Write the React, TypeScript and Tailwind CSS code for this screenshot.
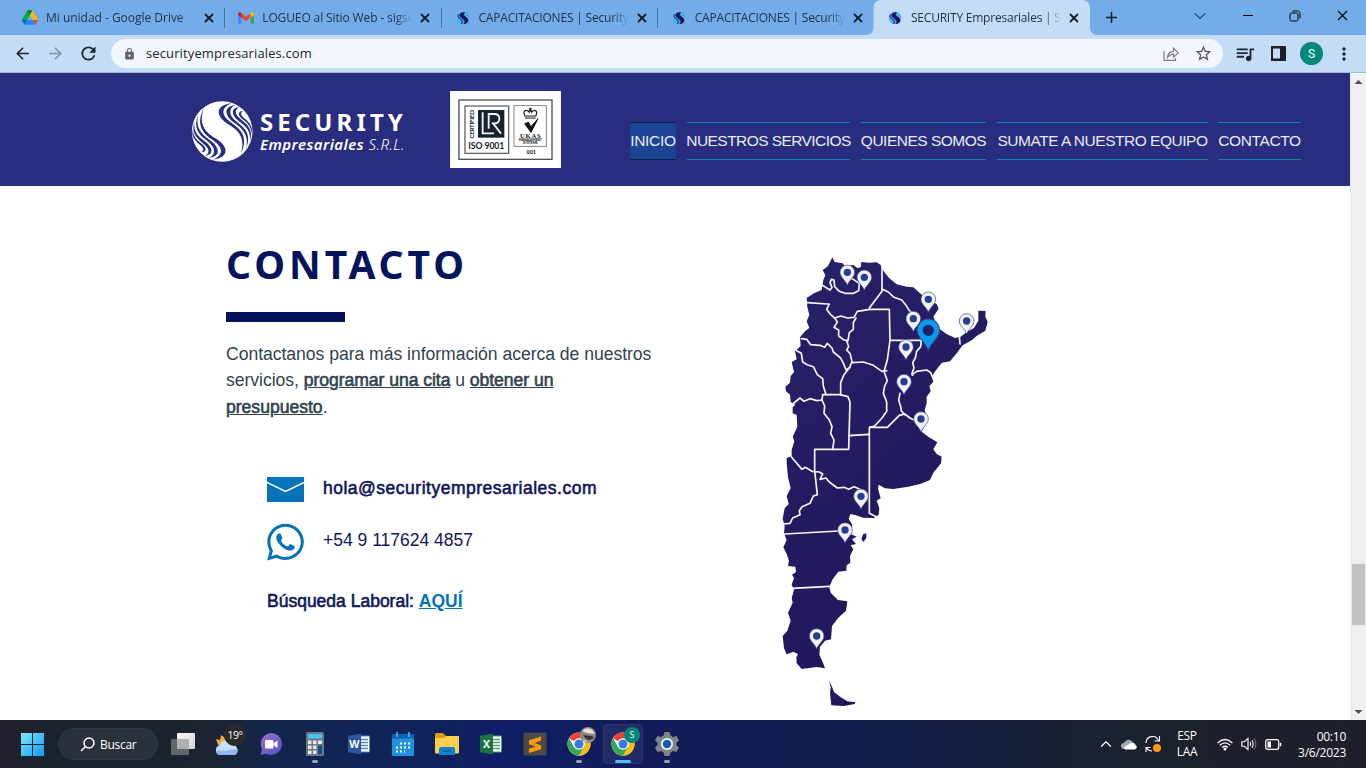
import React from "react";
import {
  MdArrowBack,
  MdArrowForward,
  MdRefresh,
  MdLock,
  MdStarBorder,
  MdQueueMusic,
  MdMoreVert,
  MdAdd,
} from "react-icons/md";
import { FaWhatsapp } from "react-icons/fa";
import { ChevronDown, ChevronUp, X } from "lucide-react";

function DriveIcon() {
  return (
    <svg viewBox="0 0 87.3 78" className="h-[15px] w-4">
      <path d="M6.6 66.85l3.85 6.65c.8 1.4 1.95 2.5 3.3 3.3L27.5 53H0c0 1.55.4 3.1 1.2 4.5z" fill="#0066da" />
      <path d="M43.65 25L29.9 1.2c-1.35.8-2.5 1.9-3.3 3.3L1.2 48.5A9 9 0 0 0 0 53h27.5z" fill="#00ac47" />
      <path d="M73.55 76.8c1.35-.8 2.5-1.9 3.3-3.3l1.6-2.75 7.65-13.25c.8-1.4 1.2-2.95 1.2-4.5H59.8l5.85 11.5z" fill="#ea4335" />
      <path d="M43.65 25L57.4 1.2C56.05.4 54.5 0 52.9 0H34.4c-1.6 0-3.15.45-4.5 1.2z" fill="#00832d" />
      <path d="M59.8 53H27.5L13.75 76.8c1.35.8 2.9 1.2 4.5 1.2h50.8c1.6 0 3.15-.45 4.5-1.2z" fill="#2684fc" />
      <path d="M73.4 26.5L60.7 4.5c-.8-1.4-1.95-2.5-3.3-3.3L43.65 25 59.8 53h27.45c0-1.55-.4-3.1-1.2-4.5z" fill="#ffba00" />
    </svg>
  );
}

function GmailIcon() {
  return (
    <svg viewBox="0 0 16 16" className="h-4 w-4">
      <path d="M0 4v8.6c0 .8.5 1.2 1.2 1.2h2.4V7z" fill="#4285f4" />
      <path d="M16 4v8.6c0 .8-.5 1.2-1.2 1.2h-2.4V7z" fill="#34a853" />
      <path d="M12.4 3.6V7.6L16 5V3.8c0-1.5-1.6-2-2.6-1.2z" fill="#fbbc04" />
      <path d="M3.6 7.6V3.4L8 6.7l4.4-3.3v4.2L8 11z" fill="#ea4335" />
      <path d="M0 3.8V5l3.6 2.6V3.4l-1-.8C1.600 1.800 0 2.300 0 3.800z" fill="#c5221f" />
    </svg>
  );
}

function SecurityIcon() {
  return (
    <svg viewBox="0 0 16 16" className="h-4 w-4">
      <circle cx="8" cy="8" r="6.200" fill="#4aa5e4" />
      <path d="M10.500 2.200C5 1.600 3 5 6 7.500s5 3.500 2.500 6.500c5-.4 6.500-4 3.500-6.500S7 5 10.500 2.200z" fill="#1c1257" />
      <path d="M3.400 4.500C2 8 5 8.500 6.500 10s1 3-.5 3.600" fill="none" stroke="#1f4fa8" strokeWidth="1.400" />
      <path d="M11.500 3c-2 1.200-1 3 .5 4.200s1.600 2 1.600 3" fill="none" stroke="#55d2f2" strokeWidth="1" />
      <path d="M2.200 7c.2 3 3.500 2.800 3.300 5.500" fill="none" stroke="#55d2f2" strokeWidth="1" />
    </svg>
  );
}

const tabs = [
  { icon: <DriveIcon />, title: "Mi unidad - Google Drive", cls: "tracking-[-0.02px]" },
  { icon: <GmailIcon />, title: "LOGUEO al Sitio Web - sigseguridad", cls: "tracking-[-0.12px]" },
  { icon: <SecurityIcon />, title: "CAPACITACIONES | Security Empresa", cls: "tracking-[-0.2px]" },
  { icon: <SecurityIcon />, title: "CAPACITACIONES | Security Empresa", cls: "tracking-[-0.2px]" },
  { icon: <SecurityIcon />, title: "SECURITY Empresariales | Servicios", cls: "tracking-[-0.22px]" },
];

function TabStrip() {
  return (
    <div className="flex h-[35px] bg-[#73ade9] pl-[9px] text-[#1e3045]">
      {tabs.map((t, i) => {
        const active = i === 4;
        return (
          <div key={i} className="relative flex w-[216.250px] shrink-0 items-center">
            {active && (
              <svg viewBox="0 0 232 35" className="absolute top-0 -left-[8px] h-[35px] w-[232px]">
                <path d="M0 35c5 0 7.500-3 7.500-8V8c0-5 3-8 8-8h200.500c5 0 8 3 8 8v19c0 5 3 8 8 8z" fill="#c5dcf7" />
              </svg>
            )}
            <div className="relative ml-[13px] flex h-4 w-4 shrink-0 items-center">{t.icon}</div>
            <div
              className={`relative ml-2 w-[151px] overflow-hidden whitespace-nowrap font-['Open_Sans',sans-serif] text-xs leading-4 [mask-image:linear-gradient(90deg,#000_88%,transparent)] ${t.cls}`}
            >
              {t.title}
            </div>
            <X className="relative ml-[5px] h-[14px] w-[14px] shrink-0 text-[#15202c]" strokeWidth={3.2} />
            {i < 3 && <div className="ml-auto h-5 w-px bg-[#4a7299]" />}
          </div>
        );
      })}
      <div className="flex w-[31px] items-center justify-end">
        <MdAdd className="h-[19px] w-[19px] text-[#15202c]" />
      </div>
      <div className="ml-auto flex h-[31px] items-center pr-[15px] text-black">
        <ChevronDown className="mr-[33px] h-5 w-5" strokeWidth={1.2} />
        <div className="mr-[36px] h-px w-[10px] bg-black" />
        <svg viewBox="0 0 12 12" className="mr-[33px] h-3 w-3" fill="none" stroke="#000">
          <rect x="1" y="3" width="8" height="8" rx="1.500" />
          <path d="M3.500 1h5c1.600 0 2.500 1 2.500 2.500v5" />
        </svg>
        <X className="h-[17px] w-[17px]" strokeWidth={1.500} />
      </div>
    </div>
  );
}

function Toolbar() {
  return (
    <div className="flex h-[38px] items-center border-b border-[#a6b9cf] bg-[#c5dcf7] text-[#1d262f]">
      <MdArrowBack className="ml-[13px] h-[19px] w-[19px]" />
      <MdArrowForward className="ml-[14px] h-[19px] w-[19px] text-[#8093a8]" />
      <MdRefresh className="ml-[13px] h-[21px] w-[21px]" />
      <div className="ml-[12px] flex h-[29px] w-[1112px] items-center rounded-full bg-[#f2f7fd]">
        <MdLock className="ml-3 h-[14px] w-[13px] text-[#5f6368]" />
        <span className="ml-[10px] font-['Open_Sans',sans-serif] text-[13px] tracking-[0.12px] text-[#22262b]">
          securityempresariales.com
        </span>
        <svg viewBox="0 0 16 16" className="ml-auto h-4 w-4" fill="none" stroke="#7a7f85" strokeWidth="1.200">
          <path d="M1 5v9.400h11.500v-2.500" />
          <path d="M4.500 11.500C4.800 8 7 5.600 10.500 5.400V2.200L15.300 6.800l-4.800 4.400V8.200C8 8.200 6 9.300 4.500 11.500z" />
        </svg>
        <MdStarBorder className="mr-[10px] ml-[15px] h-[19px] w-[19px] text-[#50565c]" />
      </div>
      <MdQueueMusic className="ml-[11px] h-[22px] w-[22px]" />
      <svg viewBox="0 0 15 15" className="ml-[15px] h-[15px] w-[15px]">
        <path d="M0 0h15v15H0zM2 2.500v10h7v-10z" fill="#1d1f24" fillRule="evenodd" />
      </svg>
      <div className="ml-[14px] flex h-[23px] w-[23px] items-center justify-center rounded-full bg-[#00897b] font-['Roboto',sans-serif] text-xs text-white">
        S
      </div>
      <MdMoreVert className="ml-[11px] h-[20px] w-[20px]" />
    </div>
  );
}

function Globe() {
  const curves = (
    <g fill="#292d80">
      <path d="M154 70C104 76 106 110 147 134C182 155 196 178 182 224C204 178 190 152 155 129C122 106 122 84 154 70z" />
      <path d="M166 75C128 80 134 108 164 129C192 149 206 168 199 203C213 168 200 146 170 125C146 106 144 86 166 75z" />
      <path d="M178 82C150 84 154 108 180 126C202 142 212 155 210 182C219 156 208 138 186 121C166 105 160 92 178 82z" />
      <path d="M189 92C170 94 174 108 191 120C207 133 213 143 215 160C219 142 210 130 196 117C184 107 178 100 189 92z" />
    </g>
  );
  return (
    <svg viewBox="33 60 186 189" className="h-[63px] w-[62px]">
      <circle cx="126.500" cy="154.500" r="91" fill="#fff" />
      {curves}
      <g transform="rotate(180 126.500 154.500)">{curves}</g>
    </svg>
  );
}

function Certificate() {
  return (
    <svg viewBox="0 0 333 231" className="h-[77px] w-[111px] bg-white">
      <rect x="27" y="27" width="279" height="178" fill="none" stroke="#4c5154" strokeWidth="4" />
      <rect x="45" y="45" width="131" height="142" fill="none" stroke="#4c5154" strokeWidth="3.500" />
      <rect x="192" y="44" width="97" height="122" fill="none" stroke="#6b7072" strokeWidth="2.500" />
      <rect x="84" y="57" width="79" height="83" fill="#17222b" />
      <path d="M98 64v63h34M116 113V69h17q15 0 15 14t-15 14h-8M130 98l23 30" fill="none" stroke="#f4f6f6" strokeWidth="5.500" />
      <text x="0" y="0" transform="translate(72 143) rotate(-90)" fontFamily="Lato, sans-serif" fontWeight="700" fontSize="19" textLength="86" fill="#17222b">CERTIFIED</text>
      <text x="55" y="173" fontFamily="Lato, sans-serif" fontWeight="700" fontSize="26" textLength="108" fill="#17222b">ISO 9001</text>
      <path d="M225 75c-8-14 2-22 12-12 0-8 8-8 8 0 10-10 20-2 12 12zM225 81h32M241 50v12M236 54h10" fill="none" stroke="#17191b" strokeWidth="3.500" />
      <path d="M224 98l12-4 6 14 22-25-21 41z" fill="#111" stroke="#111" strokeWidth="3" />
      <text x="210" y="140" fontFamily="Liberation Serif, serif" fontWeight="700" fontSize="20" textLength="62" fill="#17191b">UKAS</text>
      <text x="206" y="151" fontFamily="Lato, sans-serif" fontWeight="900" fontSize="9" textLength="70" lengthAdjust="spacingAndGlyphs" fill="#17191b">MANAGEMENT</text>
      <text x="219" y="160" fontFamily="Lato, sans-serif" fontWeight="900" fontSize="9" textLength="44" lengthAdjust="spacingAndGlyphs" fill="#17191b">SYSTEMS</text>
      <text x="230" y="188" fontFamily="Lato, sans-serif" fontWeight="900" fontSize="15" textLength="28" fill="#17191b">001</text>
    </svg>
  );
}

const nav = [
  { label: "INICIO", cls: "w-[46px] bg-[#1b4594] border-[#0d1c4e] tracking-[-0.3px]" },
  { label: "NUESTROS SERVICIOS", cls: "w-[163px] border-[#0e86b8] tracking-[-0.57px]" },
  { label: "QUIENES SOMOS", cls: "w-[125px] border-[#0e86b8] tracking-[-0.5px]" },
  { label: "SUMATE A NUESTRO EQUIPO", cls: "w-[211px] border-[#0e86b8] tracking-[-0.48px]" },
  { label: "CONTACTO", cls: "-ml-px w-[83px] border-[#0e86b8] tracking-[-0.4px]" },
];

function Header() {
  return (
    <header className="flex h-[113px] bg-[#292d80]">
      <div className="mt-[27px] ml-[191px] flex w-[259px]">
        <Globe />
        <div className="ml-[7px] text-white">
          <div className="mt-[6px] whitespace-nowrap font-['Noto_Sans',sans-serif] text-2xl leading-8 font-bold tracking-[4.100px]">
            SECURITY
          </div>
          <div className="-mt-[4px] whitespace-nowrap font-['Noto_Sans',sans-serif] text-[15px] leading-5 italic tracking-[0.46px]">
            <span className="font-semibold">Empresariales</span> <span className="font-light">S.R.L.</span>
          </div>
        </div>
      </div>
      <div className="mt-[18px]">
        <Certificate />
      </div>
      <nav className="mt-[49px] ml-[69px] flex gap-[11px]">
        {nav.map((n) => (
          <div
            key={n.label}
            className={`flex h-[38px] items-center justify-center border-y whitespace-nowrap font-['Liberation_Sans',sans-serif] text-[15.500px] text-[#e9eaf6] ${n.cls}`}
          >
            {n.label}
          </div>
        ))}
      </nav>
    </header>
  );
}

const pins = [
  [232, 67],
  [283, 82],
  [475, 148],
  [590, 213],
  [430, 206],
  [408, 291],
  [402, 395],
  [453, 507],
  [273, 739],
  [225, 840],
  [140, 1158],
];

const borders = [
  "M158 106L170 114L180 120L186 112L180 98L184 88L192 90L194 110L208 124L225 130L250 130L266 122L268 100L250 88L240 84",
  "M336 50V124L298 174",
  "M336 117L355 126L372 142L395 150L408 166L418 182L434 192L450 205",
  "M112 158L172 162L178 162L170 178L182 194L194 204L212 198L232 204L252 202L262 184L300 178L358 178L360 270L352 330L342 364",
  "M194 204L202 216L192 232L206 240L206 258L222 270L234 272L238 248L250 238L250 218L258 204",
  "M360 271H454L452 290L440 304L436 324L428 338L432 354L426 370L428 376",
  "M230 272L236 290L230 300L240 310L246 334L238 354L222 374L212 398L212 434",
  "M246 338L280 336L310 346L336 364L350 362",
  "M342 364L352 392L344 408L340 430L350 456L350 484L336 504L314 528L300 532",
  "M94 266L110 268L122 284L150 286L164 292L172 280L186 294L190 306L212 324L222 344L228 360L240 352",
  "M80 302L94 310L98 336L112 344L130 350L142 374L158 386L160 408L168 434",
  "M68 462L90 444L102 454L120 446L140 452L156 450L158 434L210 434L234 440L240 456L236 598H134V662L142 734L130 738L120 760L96 770L88 782L90 794L68 804L60 820L40 822",
  "M156 450L164 468L162 490L178 510L186 530L182 550L192 570L188 598",
  "M236 557L298 553",
  "M320 801L298 790V532H352L388 496L404 492L420 504L440 514",
  "M426 374L440 364L470 360L482 368L486 378",
  "M390 430L386 450L392 470L394 482L404 494",
  "M64 620L72 630L96 658L106 652L126 664L148 666L158 672L150 688L168 684L178 696L202 714L222 712L236 718L252 710L270 718",
  "M44 852L206 843",
  "M66 1015L180 1009",
  "M568 258L570 282",
];

function Pin({ x, y, s = 1, fill = "#f1f2f4", dot = "#263c92" }: { x: number; y: number; s?: number; fill?: string; dot?: string }) {
  return (
    <g transform={`translate(${x} ${y}) scale(${s})`}>
      <path d="M0 39C-5 24-22 15-22 0A22 22 0 0 1 22 0C22 15 5 24 0 39z" fill={fill} stroke="#3e4091" strokeWidth="2" />
      <circle r="11" fill={dot} />
    </g>
  );
}

function ArgentinaMap() {
  return (
    <svg viewBox="0 0 690 1410" className="h-[470px] w-[230px]">
      <defs>
        <linearGradient id="land" x1="0" y1="0" x2="0.400" y2="1">
          <stop offset="0" stopColor="#262269" />
          <stop offset="1" stopColor="#21165a" />
        </linearGradient>
      </defs>
      <g fill="url(#land)" strokeLinejoin="round">
        <path d="M187 22L194 36L218 40L224 48L250 45L262 54L272 52L274 36L296 38L320 37L332 45L342 65L358 85L380 103L410 110L430 112L450 130L470 146L500 162L506 176L490 200L505 235L530 252L555 264L572 260L590 246L612 234L625 212L625 182L647 183L646 200L653 215L646 242L620 258L606 270L578 286L560 310L540 334L516 338L506 350L494 366L485 380L490 395L478 408L482 424L470 440L470 460L464 480L470 500L455 545L475 560L502 577L490 598L500 612L515 620L513 640L490 668L480 690L450 702L415 710L370 717L345 715L326 704L324 716L332 745L320 752L328 774L326 794L312 804L280 803L255 795L241 792L236 806L247 824L242 852L260 860L246 868L258 882L242 886L250 898L240 918L241 938L230 946L229 962L205 965L188 988L178 1010L182 1028L204 1050L232 1054L228 1082L204 1104L186 1128L183 1168L165 1172L150 1190L148 1214L158 1236L165 1255L140 1251L95 1257L80 1240L79 1222L84 1212L70 1205L50 1213L42 1195L38 1158L52 1142L62 1112L54 1088L68 1058L65 1045L72 1020L65 1004L72 984L66 974L78 966L76 950L54 948L57 932L50 912L40 892L50 870L42 850L44 828L38 806L44 775L56 762L50 738L62 714L54 682L50 640L50 624L65 618L65 600L73 574L68 560L82 530L80 495L68 490L68 472L76 464L62 456L60 434L48 424L46 410L60 398L62 378L72 366L65 336L80 328L75 304L92 288L90 262L105 244L118 234L110 214L118 194L112 172L110 144L132 130L155 120L160 90L166 76L158 60L174 48z" />
        <path d="M177 1291L186 1310L192 1326L210 1340L232 1354L256 1357L254 1362L222 1368L184 1366L180 1330L182 1312z" />
        <path d="M280 852L289 850L289 864L280 876L274 866z" />
      </g>
      <g fill="none" stroke="#f7f7fb" strokeWidth="5" strokeLinejoin="round" strokeLinecap="round">
        {borders.map((d) => (
          <path key={d} d={d} />
        ))}
      </g>
      {pins.map(([x, y]) => (
        <Pin key={`${x}-${y}`} x={x} y={y} />
      ))}
      <Pin x={475} y={241} s={1.530} fill="#0a9bea" dot="#22236f" />
    </svg>
  );
}

function Contact() {
  return (
    <main className="flex h-[534px] bg-white font-['Liberation_Sans',sans-serif]">
      <section className="ml-[226px] w-[544px] pt-[50px]">
        <h1 className="font-['Noto_Sans',sans-serif] text-[39px] leading-[56px] font-bold tracking-[3.95px] text-[#03145a]">
          CONTACTO
        </h1>
        <div className="mt-[20px] h-[10px] w-[119px] bg-[#03145a]" />
        <p className="mt-[19px] whitespace-nowrap text-[17.600px] leading-[26.300px] tracking-[-0.040px] text-[#30434e]">
          Contactanos para más información acerca de nuestros
          <br />
          servicios,{" "}
          <a className="tracking-[-0.06px] underline [-webkit-text-stroke:0.600px]">programar una cita</a> u{" "}
          <a className="tracking-[-0.06px] underline [-webkit-text-stroke:0.600px]">obtener un</a>
          <br />
          <a className="tracking-[-0.02px] underline [-webkit-text-stroke:0.600px]">presupuesto</a>.
        </p>
        <div className="ml-[41px] text-[17.500px] text-[#10165c]">
          <div className="mt-[57px] flex h-[25px] items-center">
            <svg viewBox="0 0 37 25" className="h-[25px] w-[37px]">
              <path d="M0 0h37v25H0z" fill="#0573ba" />
              <path d="M0 5.500l18.500 9 18.500-9" fill="none" stroke="#fff" strokeWidth="1.400" />
            </svg>
            <span className="mb-[2px] ml-[19px] tracking-[0.5px] [-webkit-text-stroke:0.600px]">hola@securityempresariales.com</span>
          </div>
          <div className="mt-[22px] flex h-[37px] items-center">
            <FaWhatsapp className="h-[42px] w-[37px] text-[#0573ba]" />
            <span className="mb-[5px] ml-[19px]">+54 9 117624 4857</span>
          </div>
          <div className="mt-[30px] leading-5">
            <span className="[-webkit-text-stroke:0.600px]">Búsqueda Laboral:</span>{" "}
            <a className="font-bold text-[#0573ba] underline">AQUÍ</a>
          </div>
        </div>
      </section>
      <div className="pt-[64px]">
        <ArgentinaMap />
      </div>
    </main>
  );
}

function Scrollbar() {
  return (
    <div className="flex h-full w-4 flex-col items-center bg-[#f0f0f0]">
      <svg viewBox="0 0 16 17" className="h-[17px] w-4">
        <path d="M4.500 11L8.500 7l4 4z" fill="#4f4f4f" />
      </svg>
      <div className="mt-[474px] ml-px h-[61px] w-[13px] bg-[#c1c1c1]" />
      <svg viewBox="0 0 16 17" className="mt-auto h-[17px] w-4">
        <path d="M4.500 7l4 4 4-4z" fill="#4f4f4f" />
      </svg>
    </div>
  );
}

function ChromeIcon() {
  return (
    <svg viewBox="0 0 24 24" className="h-6 w-6">
      <circle cx="12" cy="12" r="11.500" fill="#fff" />
      <path d="M12 12L2.040 6.250A11.500 11.500 0 0 1 21.960 6.250L12 6.250z" fill="#ea4335" />
      <path d="M12 6.250H21.960A11.500 11.500 0 0 1 12 23.500L17 14.900z" fill="#fbbc04" />
      <path d="M2.040 6.250A11.500 11.500 0 0 0 12 23.500L17 14.900H7z" fill="#34a853" />
      <circle cx="12" cy="12" r="5.800" fill="#fff" />
      <circle cx="12" cy="12" r="4.500" fill="#3b78e7" />
    </svg>
  );
}

function OfficeIcon({ letter, color, light }: { letter: string; color: string; light: string }) {
  return (
    <svg viewBox="0 0 24 24" className="h-6 w-6">
      <path d="M12 4h10.500v16H12z" fill="#fff" stroke={light} strokeWidth="1" />
      <path d="M14 7.500h7M14 10.500h7M14 13.500h7M14 16.500h7" stroke={light} strokeWidth="1.500" />
      <path d="M1 3.800L14 1.500v21L1 20.200z" fill={color} />
      <text x="7.400" y="15.800" textAnchor="middle" fontFamily="Open Sans, sans-serif" fontWeight="700" fontSize="10.500" fill="#fff">{letter}</text>
    </svg>
  );
}

function Cell({ children, dot, active }: { children: React.ReactNode; dot?: boolean; active?: boolean }) {
  return (
    <div className="relative flex h-12 w-11 shrink-0 items-center justify-center">
      {active && <div className="absolute top-1 h-10 w-10 rounded border border-[#2f3970] bg-[#212c66]" />}
      <div className="relative">{children}</div>
      {dot && <div className="absolute bottom-[5px] h-[3px] w-[6px] rounded-full bg-[#9aa0b4]" />}
      {active && <div className="absolute bottom-[5px] h-[3px] w-4 rounded-full bg-[#4cc2ff]" />}
    </div>
  );
}

function Taskbar() {
  return (
    <div className="flex h-12 items-center bg-[linear-gradient(90deg,#1d222c_0px,#1b2430_210px,#12264e_270px,#10225a_420px,#101e66_500px,#131b55_700px,#121d48_900px,#1a2130_1090px,#1e2029_1366px)] pl-[10px] font-['Open_Sans',sans-serif] text-xs text-white">
      <Cell>
        <svg viewBox="0 0 23 23" className="h-[23px] w-[23px]">
          <defs>
            <linearGradient id="win" x1="0" y1="0" x2="1" y2="1">
              <stop offset="0" stopColor="#7de8fb" />
              <stop offset="1" stopColor="#109af2" />
            </linearGradient>
          </defs>
          <path d="M0 0h11v11H0zM12 0h11v11H12zM0 12h11v11H0zM12 12h11v11H12z" fill="url(#win)" />
        </svg>
      </Cell>
      <div className="mr-[3px] ml-1 flex h-8 w-[100px] items-center rounded-full border border-[#323943] bg-[#2a313b] pl-[21px]">
        <svg viewBox="0 0 15 15" className="h-[15px] w-[15px]" fill="none" stroke="#fff" strokeWidth="1.500">
          <circle cx="9" cy="6" r="5" />
          <path d="M5.500 9.500L1 14" />
        </svg>
        <span className="mt-px ml-[5px] tracking-[-0.3px]">Buscar</span>
      </div>
      <Cell>
        <svg viewBox="0 0 24 24" className="h-6 w-6">
          <defs>
            <linearGradient id="tv" x1="0" y1="0" x2="1" y2="1">
              <stop offset="0" stopColor="#fff" />
              <stop offset="1" stopColor="#cfcfcf" />
            </linearGradient>
          </defs>
          <rect x="6" y="1" width="18" height="16" rx="1" fill="url(#tv)" />
          <rect x="0" y="7" width="18" height="16" rx="1" fill="#6f7276" opacity=".85" />
          <path d="M6 7h12v10H6z" fill="#aeb0b2" />
        </svg>
      </Cell>
      <Cell>
        <svg viewBox="0 0 28 28" className="h-7 w-7">
          <path d="M3 9l4 1 1-5 4 3 4-2v6L5 15z" fill="#f8a832" />
          <path d="M7 25a5 5 0 0 1-1-9.500 7 7 0 0 1 13-1A5.500 5.500 0 0 1 21 25z" fill="#c9dffc" />
          <path d="M3.500 23a4 4 0 0 1 2-3c6 2 12-1 19.500-1 0 4-2 6-4 6H7q-2.500 0-3.500-2z" fill="#8fb8f2" />
        </svg>
        <div className="absolute -top-[6px] left-[11px] flex h-[22px] w-[22px] items-center justify-center rounded-full bg-[#2b2b2c] text-[10.500px] tracking-tighter">
          19°
        </div>
      </Cell>
      <Cell>
        <svg viewBox="0 0 24 24" className="h-6 w-6">
          <defs>
            <linearGradient id="tm" x1="0" y1="0" x2="1" y2="1">
              <stop offset="0" stopColor="#a06fc9" />
              <stop offset="1" stopColor="#4b52c4" />
            </linearGradient>
          </defs>
          <path d="M12 1a11 11 0 1 1-5 20.800L1.500 23 3 17A11 11 0 0 1 12 1z" fill="url(#tm)" />
          <rect x="6" y="8" width="8.500" height="8.500" rx="1.500" fill="#fff" />
          <path d="M15 11l3.500-2.500v7.500L15 13.500z" fill="#fff" />
        </svg>
      </Cell>
      <Cell dot>
        <svg viewBox="0 0 24 24" className="h-6 w-6">
          <rect x="3" y="0" width="18" height="24" rx="1.500" fill="#6f7782" />
          <rect x="5" y="2" width="14" height="4.500" fill="#45c6f2" />
          <path d="M5 8.500h3.500v3.500H5zM10 8.500h3.500v3.500H10zM15 8.500h4v3.500h-4zM5 13.500h3.500V17H5zM10 13.500h3.500V17H10zM5 18.500h3.500V22H5zM10 18.500h3.500V22H10z" fill="#e5e8ec" />
          <path d="M15 13.500h4V22h-4z" fill="#0c4f8f" />
        </svg>
      </Cell>
      <Cell>
        <OfficeIcon letter="W" color="#2b579a" light="#5c86c4" />
      </Cell>
      <Cell>
        <svg viewBox="0 0 24 24" className="h-6 w-6">
          <rect x="1" y="2" width="22" height="22" rx="1.500" fill="#2191e0" />
          <path d="M1 2h22v4.500H1z" fill="#0c62b0" />
          <path d="M6 0v5M18 0v5" stroke="#45c6f2" strokeWidth="1.500" />
          <path d="M9 11.500h10M5 15.500h14M5 19.500h9" stroke="#fff" strokeWidth="2" strokeDasharray="2 2" />
        </svg>
      </Cell>
      <Cell>
        <svg viewBox="0 0 26 24" className="h-6 w-[26px]">
          <path d="M1 2.500Q1 1 2.500 1H9l3 3h12q1 0 1 1v6H1z" fill="#e19b0a" />
          <path d="M1 6h9l2-2h12q1 0 1 1v15.500q0 1-1 1H2q-1 0-1-1z" fill="#fcd04f" />
          <path d="M5 23v-6q0-2 2-2h12q2 0 2 2v6z" fill="#1181d2" />
          <path d="M9 19h8" stroke="#0a5fa5" strokeWidth="1.500" />
        </svg>
      </Cell>
      <Cell>
        <OfficeIcon letter="X" color="#1e7145" light="#4e9d6d" />
      </Cell>
      <Cell>
        <svg viewBox="0 0 24 24" className="h-6 w-6">
          <rect x="0.500" y="0.500" width="23" height="23" rx="1.500" fill="#4a4a4a" />
          <path d="M18 4.500v4.200L11.500 11l6.500 2.200v4L6 21v-4.200l6.500-2.200L6 12.300v-4z" fill="#ff9800" />
        </svg>
      </Cell>
      <Cell dot>
        <ChromeIcon />
        <svg viewBox="0 0 16 16" className="absolute -top-[5px] left-[13px] h-4 w-4">
          <circle cx="8" cy="8" r="8" fill="#8a8781" />
          <path d="M2 4Q7-1 12 3l3 4-8-1z" fill="#e6e2da" />
          <path d="M3 8l9 1 2 2q-4 3-8 1z" fill="#393632" />
          <path d="M3 12l5 3-3 .3z" fill="#ddd6ca" />
        </svg>
      </Cell>
      <Cell active>
        <ChromeIcon />
        <div className="absolute -top-[5px] left-[13px] flex h-4 w-4 items-center justify-center rounded-full bg-[#008577] text-[9px]">
          S
        </div>
      </Cell>
      <Cell dot>
        <svg viewBox="0 0 24 24" className="h-6 w-6">
          <path
            d="M9.500 0h5l1 3.600 2.500 1.400 3.500-1 2.500 4.300-2.600 2.600v2.200l2.600 2.600-2.500 4.300-3.500-1-2.500 1.400-1 3.600h-5l-1-3.600L6 19l-3.500 1L0 15.700l2.600-2.600v-2.200L0 8.300 2.500 4 6 5l2.500-1.400z"
            fill="#7e858d"
          />
          <circle cx="12" cy="12" r="6" fill="#f3f7fa" />
          <circle cx="12" cy="12" r="4.200" fill="#0f5fae" />
        </svg>
      </Cell>
      <div className="ml-auto flex items-center pr-5">
        <ChevronUp className="mr-[6px] h-[18px] w-[18px]" strokeWidth={1.600} />
        <svg viewBox="0 0 16 11" className="mr-[7px] h-[11px] w-4">
          <path d="M3 10a3 3 0 0 1 0-6 5 5 0 0 1 9-.6A3.500 3.500 0 0 1 13 10z" fill="#a4a8ae" />
          <path d="M4 10.500q-2-2 1-3.500l5-3q3-1 3.500 1.500 3 1 2 3.500-.8 1.500-2.500 1.500z" fill="#fff" />
        </svg>
        <svg viewBox="0 0 18 18" className="mr-[13px] h-[18px] w-[18px]" fill="none" stroke="#fff" strokeWidth="1.100">
          <path d="M2 8A6.500 6.500 0 0 1 14.500 5.500M15.500 1v5h-5M2 17v-4.500h4.500M2.500 13q2 3 5.500 3" />
          <circle cx="13" cy="13" r="4" fill="#ff9a0a" stroke="none" />
        </svg>
        <div className="mr-[18px] w-[24px] text-center leading-4 tracking-[-0.3px]">
          ESP
          <br />
          LAA
        </div>
        <svg viewBox="0 0 16 13" className="mr-[8px] h-[13px] w-4" fill="none" stroke="#fff" strokeWidth="1.300">
          <path d="M.6 5Q8-2 15.400 5M2.800 7.300Q8 2.500 13.200 7.300M5.200 9.500Q8 7 10.800 9.500" />
          <circle cx="8" cy="11" r="1.500" fill="#fff" stroke="none" />
        </svg>
        <svg viewBox="0 0 16 14" className="mr-[8px] h-[14px] w-4" fill="none" stroke="#fff" strokeWidth="1.100">
          <path d="M.8 4.800h2.500L7 1.500v11L3.300 9.200H.8zM9 5q1.200 2 0 4M11 3.200q2.300 3.800 0 7.600" />
          <path d="M13.200 1.500q3.400 5.500 0 11" stroke="#697080" />
        </svg>
        <svg viewBox="0 0 17 11" className="mr-[16px] h-[11px] w-[17px]" fill="none" stroke="#fff" strokeWidth="1.200">
          <rect x=".7" y=".7" width="13" height="9.600" rx="2" />
          <path d="M2.500 2.500h3.500v6H2.500z" fill="#fff" stroke="none" />
          <path d="M15.500 3.800v3.400" strokeWidth="1.500" />
        </svg>
        <div className="w-[48px] pt-px text-right leading-4 tracking-[-0.25px] whitespace-nowrap">
          00:10
          <br />
          3/6/2023
        </div>
      </div>
    </div>
  );
}

export default function App() {
  return (
    <div className="flex h-[768px] w-[1366px] flex-col overflow-hidden bg-white">
      <TabStrip />
      <Toolbar />
      <div className="flex h-[647px]">
        <div className="w-[1350px]">
          <Header />
          <Contact />
        </div>
        <Scrollbar />
      </div>
      <Taskbar />
    </div>
  );
}
